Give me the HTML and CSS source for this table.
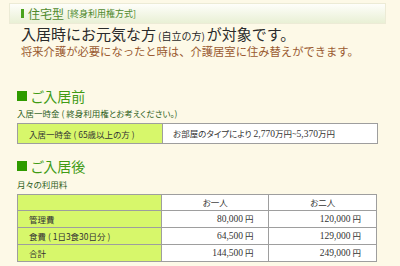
FILE: index.html
```html
<!DOCTYPE html>
<html lang="ja">
<head>
<meta charset="utf-8">
<title>住宅型</title>
<link rel="stylesheet" href="styles.css">
</head>
<body>
<div class="page">
  <div class="title-bar">
    <span class="title-mark"></span>
    <span class="title-main">住宅型</span>
    <span class="title-sub">[終身利用権方式]</span>
  </div>
  <p class="lead">入居時にお元気な方<span class="lead-small">(自立の方)</span>が対象です。</p>
  <p class="note">将来介護が必要になったと時は、介護居室に住み替えができます。</p>

  <h2 class="sec-head sec-first"><span class="sq"></span>ご入居前</h2>
  <p class="sub-head">入居一時金 ( 終身利用権とお考えください。)</p>
  <table class="tbl tbl-one">
    <tr>
      <th class="lab">入居一時金 ( 65歳以上の方 )</th>
      <td class="txt">お部屋のタイプにより <span class="num">2,770</span>万円~<span class="num">5,370</span>万円</td>
    </tr>
  </table>

  <h2 class="sec-head sec-second"><span class="sq"></span>ご入居後</h2>
  <p class="sub-head">月々の利用料</p>
  <table class="tbl tbl-two">
    <tr>
      <th class="lab"></th>
      <td class="colh">お一人</td>
      <td class="colh">お二人</td>
    </tr>
    <tr>
      <th class="lab">管理費</th>
      <td class="val"><span class="num">80,000</span> 円</td>
      <td class="val"><span class="num">120,000</span> 円</td>
    </tr>
    <tr>
      <th class="lab">食費 ( 1日3食30日分 )</th>
      <td class="val"><span class="num">64,500</span> 円</td>
      <td class="val"><span class="num">129,000</span> 円</td>
    </tr>
    <tr>
      <th class="lab">合計</th>
      <td class="val"><span class="num">144,500</span> 円</td>
      <td class="val"><span class="num">249,000</span> 円</td>
    </tr>
  </table>
</div>
</body>
</html>
```
FILE: styles.css
```css
html, body {
  margin: 0;
  padding: 0;
  background: #fdf9e7;
}
body {
  font-family: "Noto Sans CJK JP", "Noto Sans", sans-serif;
  color: #333;
}
.page {
  padding: 3px 0 0 9px;
  width: 378px;
}
.title-bar {
  box-sizing: border-box;
  height: 21px;
  width: 377px;
  border: 1px solid #ecebd6;
  background: linear-gradient(#fefefa, #e9f0d5);
  display: flex;
  align-items: center;
  padding-left: 11px;
}
.title-mark {
  width: 3px;
  height: 9px;
  background: #4aa21c;
  margin-right: 4px;
}
.title-main {
  font-size: 12px;
  color: #4f8a2e;
  line-height: 1;
}
.title-sub {
  font-size: 9px;
  color: #4f8a2e;
  margin-left: 3px;
  line-height: 1;
}
.lead {
  margin: 2px 0 0 12px;
  font-size: 15px;
  line-height: 16px;
  color: #2a2a2a;
}
.lead-small {
  font-size: 10px;
  margin: 0 2px;
}
.note {
  margin: 1px 0 0 12px;
  font-size: 11.3px;
  line-height: 13px;
  color: #9a5a30;
}
.sec-head {
  margin: 0 0 0 8px;
  font-size: 14px;
  font-weight: normal;
  color: #3f9b14;
  line-height: 16px;
  display: flex;
  align-items: center;
  font-feature-settings: "palt";
}
.sec-first {
  margin-top: 30px;
}
.sec-second {
  margin-top: 14px;
}
.sec-head .sq {
  width: 10px;
  height: 10px;
  background: #2f9b00;
  margin-right: 4px;
}
.sub-head {
  margin: 3px 0 0 8px;
  font-size: 8.5px;
  line-height: 12px;
  color: #2d5f1c;
  font-feature-settings: "palt";
}
.sec-second + .sub-head {
  margin-top: 4px;
}
.tbl {
  margin: 4px 0 0 8px;
  border-collapse: collapse;
  font-size: 8.5px;
  color: #333;
  font-feature-settings: "palt";
}
.tbl th, .tbl td {
  border: 1px solid #9e9e9e;
  font-weight: normal;
  padding: 0;
}
.tbl .lab {
  background: #d7f76b;
  text-align: left;
  padding-left: 11px;
  width: 133px;
}
.tbl-one {
  width: 361px;
}
.tbl-one th, .tbl-one td {
  line-height: 18px;
}
.tbl-one .txt {
  background: #fff;
  padding-left: 10px;
}
.tbl-two {
  width: 360px;
}
.tbl-two th, .tbl-two td {
  line-height: 15px;
}
.tbl-two .colh {
  background: #fff;
  text-align: center;
  width: 107px;
}
.tbl-two .val {
  background: #fff;
  text-align: right;
  padding-right: 15px;
}
.num {
  font-family: "Liberation Serif", serif;
  font-size: 9.5px;
}
```
